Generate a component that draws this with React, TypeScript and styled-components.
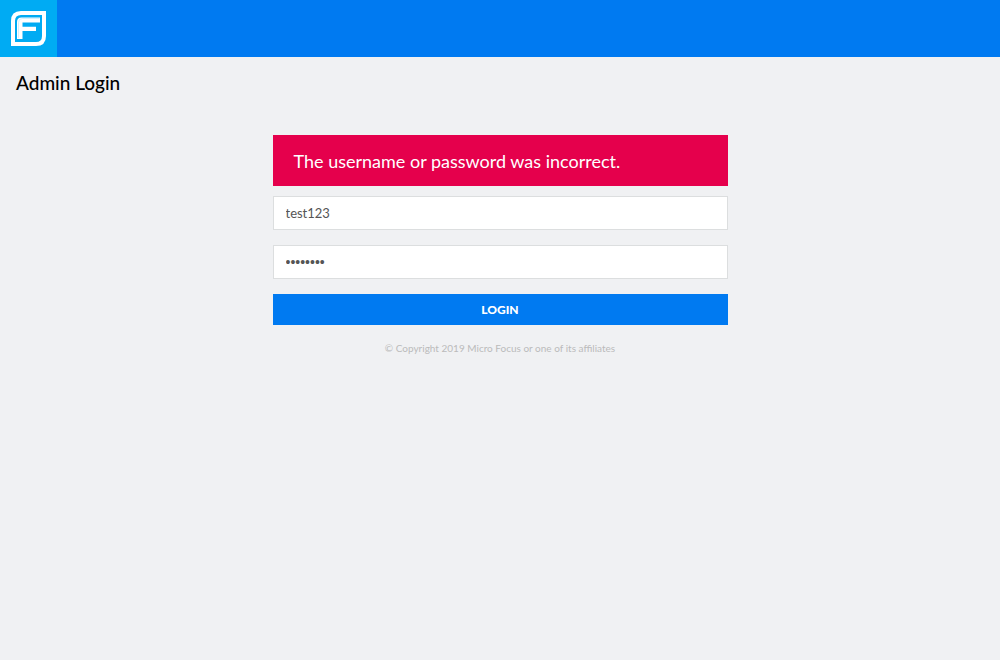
import React, { useState } from "react";
import styled, { createGlobalStyle } from "styled-components";

const GlobalStyle = createGlobalStyle`
  *, *::before, *::after { box-sizing: border-box; }
  body {
    margin: 0;
    background: #f0f1f3;
    font-family: Lato, "Open Sans", sans-serif;
    color: #000;
  }
`;

const TopBar = styled.header`
  display: flex;
  height: 57px;
  background: #007af1;
`;

const Brand = styled.a`
  display: flex;
  align-items: center;
  justify-content: center;
  width: 57px;
  background: #00abf3;
`;

const PageTitle = styled.h1`
  margin: 0;
  padding: 14px 16px;
  font-size: 19px;
  line-height: 24px;
  font-weight: 500;
`;

const LoginForm = styled.form`
  display: flex;
  flex-direction: column;
  width: calc(100% - 32px);
  max-width: 455px;
  margin: 26px auto 0;
`;

const ErrorBanner = styled.div`
  margin-bottom: 10px;
  padding: 14px 21px 13px;
  background: #e5004c;
  color: #fff;
  font-size: 18px;
  line-height: 24px;
`;

const Field = styled.input`
  width: 100%;
  height: 34px;
  margin: 0 0 15px;
  padding: 0 12px;
  border: 1px solid #dcdedf;
  border-radius: 0;
  background: #fff;
  color: #555;
  font-family: inherit;
  font-size: 13px;
  outline: none;

  &[type="password"] {
    font-family: "Liberation Sans", Arial, sans-serif;
    font-size: 14px;
  }
`;

const SubmitButton = styled.button`
  height: 31px;
  padding: 0;
  border: 0;
  background: #007af1;
  color: #fff;
  font-family: inherit;
  font-size: 12px;
  font-weight: 900;
  line-height: 31px;
`;

const Copyright = styled.p`
  margin: 15px 0 0;
  color: #bbb;
  text-align: center;
  font-size: 10px;
  line-height: 16px;
`;

const Logo = () => (
  <svg width="35" height="35" viewBox="0 0 35 35" aria-hidden="true">
    <path d="M10 2H33V25Q33 33 25 33H2V10Q2 2 10 2Z" fill="none" stroke="#fff" strokeWidth="4" />
    <path d="M6 28V11Q6 6.500 10.500 6.500H29V11.500H11.500V15.700H25V20H11.500V28Z" fill="#fff" />
    <path d="M7.500 27V11.500Q7.500 7.500 11.500 7.500H28.500" fill="none" stroke="#b5e6fc" strokeWidth="0.600" />
  </svg>
);

export default function App() {
  const [username, setUsername] = useState("test123");
  const [password, setPassword] = useState("password");
  return (
    <>
      <GlobalStyle />
      <TopBar>
        <Brand href="#" aria-label="Home">
          <Logo />
        </Brand>
      </TopBar>
      <main>
        <PageTitle>Admin Login</PageTitle>
        <LoginForm onSubmit={(e) => e.preventDefault()}>
          <ErrorBanner role="alert">The username or password was incorrect.</ErrorBanner>
          <Field aria-label="Username" type="text" value={username} onChange={(e) => setUsername(e.target.value)} />
          <Field aria-label="Password" type="password" value={password} onChange={(e) => setPassword(e.target.value)} />
          <SubmitButton type="submit">LOGIN</SubmitButton>
          <Copyright>© Copyright 2019 Micro Focus or one of its affiliates</Copyright>
        </LoginForm>
      </main>
    </>
  );
}
